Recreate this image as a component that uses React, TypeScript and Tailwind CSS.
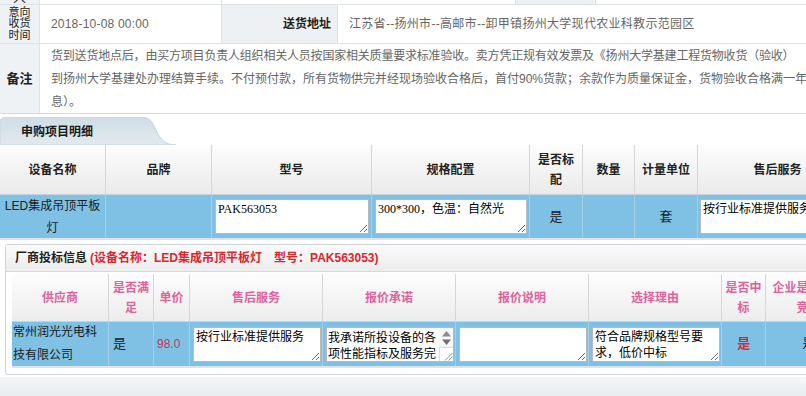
import React from "react";

const TA_BASE =
  "block w-full h-[35px] bg-white border border-[#b9b9b9] px-[2px] py-[1px] text-[12px] leading-[16px] text-black outline-none font-['Liberation_Serif','Noto_Sans_CJK_SC',serif]";

function TA({ value }: { value: string }) {
  return <textarea readOnly defaultValue={value} className={TA_BASE} />;
}

function ScrollTA({ value }: { value: string }) {
  return (
    <div className="w-full h-[35px] bg-white border border-[#b9b9b9] flex overflow-hidden">
      <div className="flex-1 min-w-0 pl-[1px] pt-[1px] text-[12px] leading-[16px] text-black break-all overflow-hidden font-['Noto_Sans_CJK_SC',sans-serif]">
        {value}
      </div>
      <div className="w-[14px] shrink-0 flex flex-col items-center bg-[#f7f7f7]">
        <svg width="9" height="6" viewBox="0 0 9 6" className="mt-[3px]">
          <path d="M4.5 0 L9 5.5 L0 5.5 Z" fill="#8a8a8a" />
        </svg>
        <svg width="9" height="6" viewBox="0 0 9 6" className="mt-[2px]">
          <path d="M0 0.5 L9 0.5 L4.5 6 Z" fill="#6f6f6f" />
        </svg>
        <div className="mt-auto w-[14px] h-[14px] bg-white border-l border-t border-[#dcdcdc] flex items-end justify-end">
          <svg width="9" height="9" viewBox="0 0 9 9">
            <path d="M1 8.5 L8.5 1 M4.5 8.5 L8.5 4.5" stroke="#8a8a8a" strokeWidth="1" />
          </svg>
        </div>
      </div>
    </div>
  );
}

export default function App() {
  return (
    <div className="w-[806px] h-[396px] overflow-hidden bg-white text-[12px] text-[#333] flex flex-col font-['Liberation_Sans','Noto_Sans_CJK_SC',sans-serif]">
      {/* top info table */}
      <div className="-mt-[20px] w-[806px] overflow-hidden shrink-0">
        <div className="flex h-[25px] border-b border-[#dde2e6]">
          <div className="w-[40px] shrink-0 bg-[#eef2f5] border-r border-[#dde2e6] flex items-end justify-center text-[13px] leading-[13px] text-[#222]">
            人
          </div>
          <div className="w-[182px] shrink-0 border-r border-[#dde2e6]" />
          <div className="w-[294px] shrink-0 border-r border-[#dde2e6]" />
          <div className="w-[80px] shrink-0 bg-[#eef1f4] border-r border-[#dde2e6]" />
          <div className="flex-1" />
        </div>
        <div className="flex h-[39px] border-b border-[#dde2e6]">
          <div className="w-[40px] shrink-0 bg-[#eef2f5] border-r border-[#dde2e6] flex flex-col items-center justify-center text-[11px] leading-[11.5px] text-[#222]">
            <span>意向</span>
            <span>收货</span>
            <span>时间</span>
          </div>
          <div className="w-[182px] shrink-0 border-r border-[#dde2e6] flex items-center pl-[11px] text-[#666] tracking-[0.2px]">
            2018-10-08 00:00
          </div>
          <div className="w-[116px] shrink-0 bg-[#eef1f4] border-r border-[#dde2e6] flex items-center justify-end pr-[6px] font-bold text-[#222]">
            送货地址
          </div>
          <div className="flex-1 flex items-center pl-[11px] text-[#666] tracking-[0.3px] whitespace-nowrap">
            江苏省--扬州市--高邮市--卸甲镇扬州大学现代农业科教示范园区
          </div>
        </div>
        <div className="flex h-[70px] border-b border-[#d3d9de]">
          <div className="w-[40px] shrink-0 bg-[#eef2f5] border-r border-[#dde2e6] flex items-center justify-center text-[13px] font-bold text-[#222]">
            备注
          </div>
          <div className="flex-1 pl-[11px] pt-[1px] text-[#666] leading-[23px] whitespace-nowrap overflow-hidden">
            <div className="tracking-[-0.2px]">货到送货地点后，由买方项目负责人组织相关人员按国家相关质量要求标准验收。卖方凭正规有效发票及《扬州大学基建工程货物收货（验收）</div>
            <div>到扬州大学基建处办理结算手续。不付预付款，所有货物供完并经现场验收合格后，首付90%货款；余款作为质量保证金，货物验收合格满一年后无质量问题付清（不计</div>
            <div>息）。</div>
          </div>
        </div>
      </div>

      {/* tab strip */}
      <div className="h-[31px] flex items-end shrink-0">
        <div className="relative w-[176px] h-[28px]">
          <svg className="absolute inset-0" width="176" height="28" viewBox="0 0 176 28">
            <defs>
              <linearGradient id="tabg" x1="0" y1="0" x2="0" y2="1">
                <stop offset="0" stopColor="#cfdde5" />
                <stop offset="1" stopColor="#e2eaee" />
              </linearGradient>
            </defs>
            <path
              d="M0 28 L0 6 Q0 0 6 0 L141 0 C150 0 153 6 156 13 C160 22 165 28 176 28 Z"
              fill="url(#tabg)"
              stroke="#c6d5dd"
              strokeWidth="1"
            />
          </svg>
          <span className="relative block pl-[21px] pt-[7px] font-bold text-[12px] text-[#1a1a1a] leading-[16px]">
            申购项目明细
          </span>
        </div>
      </div>

      {/* purchase detail table */}
      <div className="w-[806px] overflow-hidden shrink-0">
        <div className="flex w-[900px] h-[50px] bg-linear-to-b from-[#fdfdfd] to-[#eaeaea] border-b border-[#c9d3d9] font-bold text-[#222] text-center leading-[20px]">
          <div className="w-[106px] shrink-0 border-r border-[#d6d6d6] flex items-center justify-center">设备名称</div>
          <div className="w-[106px] shrink-0 border-r border-[#d6d6d6] flex items-center justify-center">品牌</div>
          <div className="w-[160px] shrink-0 border-r border-[#d6d6d6] flex items-center justify-center">型号</div>
          <div className="w-[158px] shrink-0 border-r border-[#d6d6d6] flex items-center justify-center">规格配置</div>
          <div className="w-[53px] shrink-0 border-r border-[#d6d6d6] flex items-center justify-center">
            是否标<br />配
          </div>
          <div className="w-[52px] shrink-0 border-r border-[#d6d6d6] flex items-center justify-center">数量</div>
          <div className="w-[63px] shrink-0 border-r border-[#d6d6d6] flex items-center justify-center">计量单位</div>
          <div className="w-[160px] shrink-0 border-r border-[#d6d6d6] flex items-center justify-center">售后服务</div>
        </div>
        <div className="flex w-[900px] h-[43px] bg-[#7fc1e4] text-[#1a1a1a]">
          <div className="w-[106px] shrink-0 border-r border-[#a5cfe5] flex items-center justify-center text-center leading-[22px]">
            LED集成吊顶平板<br />灯
          </div>
          <div className="w-[106px] shrink-0 border-r border-[#a5cfe5]" />
          <div className="w-[160px] shrink-0 border-r border-[#a5cfe5] flex items-center pl-[3px] pr-[2px]">
            <TA value="PAK563053" />
          </div>
          <div className="w-[158px] shrink-0 border-r border-[#a5cfe5] flex items-center pl-[3px] pr-[2px]">
            <TA value="300*300，色温：自然光" />
          </div>
          <div className="w-[53px] shrink-0 border-r border-[#a5cfe5] flex items-center justify-center text-[13px]">是</div>
          <div className="w-[52px] shrink-0 border-r border-[#a5cfe5]" />
          <div className="w-[63px] shrink-0 border-r border-[#a5cfe5] flex items-center justify-center text-[13px]">套</div>
          <div className="w-[160px] shrink-0 border-r border-[#a5cfe5] flex items-center pl-[2px] pr-[2px]">
            <TA value="按行业标准提供服务" />
          </div>
        </div>
        <div className="h-[2px] bg-[#dce4e9]" />
      </div>

      {/* vendor bid panel */}
      <div className="mt-[4px] ml-[5px] w-[860px] shrink-0 border border-[#cfd5da] rounded-[3px] bg-white">
        <div className="h-[27px] bg-linear-to-b from-[#fbfbfb] to-[#ececec] border-b border-[#d3d9dd] flex items-center pl-[9px] font-bold whitespace-nowrap">
          <span className="text-[#222]">厂商投标信息</span>
          <span className="text-[#e0242a] ml-[3px]">(设备名称：LED集成吊顶平板灯　型号：PAK563053)</span>
        </div>
        <div className="pl-[6px] pt-[2px] pb-[6px]">
          <div className="flex h-[48px] bg-linear-to-b from-[#fdfdfd] to-[#ececec] border-b border-[#c9d3d9] font-bold text-[#e2619a] text-center leading-[20px]">
            <div className="w-[97px] shrink-0 border-r border-[#d6d6d6] flex items-center justify-center">供应商</div>
            <div className="w-[45px] shrink-0 border-r border-[#d6d6d6] flex items-center justify-center">
              是否满<br />足
            </div>
            <div className="w-[36px] shrink-0 border-r border-[#d6d6d6] flex items-center justify-center">单价</div>
            <div className="w-[133px] shrink-0 border-r border-[#d6d6d6] flex items-center justify-center">售后服务</div>
            <div className="w-[133px] shrink-0 border-r border-[#d6d6d6] flex items-center justify-center">报价承诺</div>
            <div className="w-[133px] shrink-0 border-r border-[#d6d6d6] flex items-center justify-center">报价说明</div>
            <div className="w-[133px] shrink-0 border-r border-[#d6d6d6] flex items-center justify-center">选择理由</div>
            <div className="w-[44px] shrink-0 border-r border-[#d6d6d6] flex items-center justify-center">
              是否中<br />标
            </div>
            <div className="w-[86px] shrink-0 border-r border-[#d6d6d6] flex items-center justify-center">
              企业是否参与<br />竞标
            </div>
          </div>
          <div className="flex h-[44px] bg-[#7fc1e4] text-[#1a1a1a]">
            <div className="w-[97px] shrink-0 border-r border-[#a5cfe5] flex items-center pl-[1px] leading-[23px]">
              <span>常州润光光电科<br />技有限公司</span>
            </div>
            <div className="w-[45px] shrink-0 border-r border-[#a5cfe5] flex items-center pl-[4px] text-[13px]">是</div>
            <div className="w-[36px] shrink-0 border-r border-[#a5cfe5] flex items-center pl-[3px] text-[#c8325f]">98.0</div>
            <div className="w-[133px] shrink-0 border-r border-[#a5cfe5] flex items-center pl-[3px] pr-[1px]">
              <TA value="按行业标准提供服务" />
            </div>
            <div className="w-[133px] shrink-0 border-r border-[#a5cfe5] flex items-center pl-[3px] pr-[1px]">
              <ScrollTA value="我承诺所投设备的各项性能指标及服务完全满足采购要求。" />
            </div>
            <div className="w-[133px] shrink-0 border-r border-[#a5cfe5] flex items-center pl-[3px] pr-[1px]">
              <TA value="" />
            </div>
            <div className="w-[133px] shrink-0 border-r border-[#a5cfe5] flex items-center pl-[3px] pr-[1px]">
              <TA value="符合品牌规格型号要求，低价中标" />
            </div>
            <div className="w-[44px] shrink-0 border-r border-[#a5cfe5] flex items-center justify-center font-bold text-[13px] text-[#d3283c]">是</div>
            <div className="w-[86px] shrink-0 border-r border-[#a5cfe5] flex items-center justify-center">是</div>
          </div>
          <div className="h-[2px] bg-[#dce4e9]" />
        </div>
      </div>

      <div className="flex-1 mt-[2px] bg-linear-to-b from-[#f4f6f7] to-[#eaedf0]" />
    </div>
  );
}
